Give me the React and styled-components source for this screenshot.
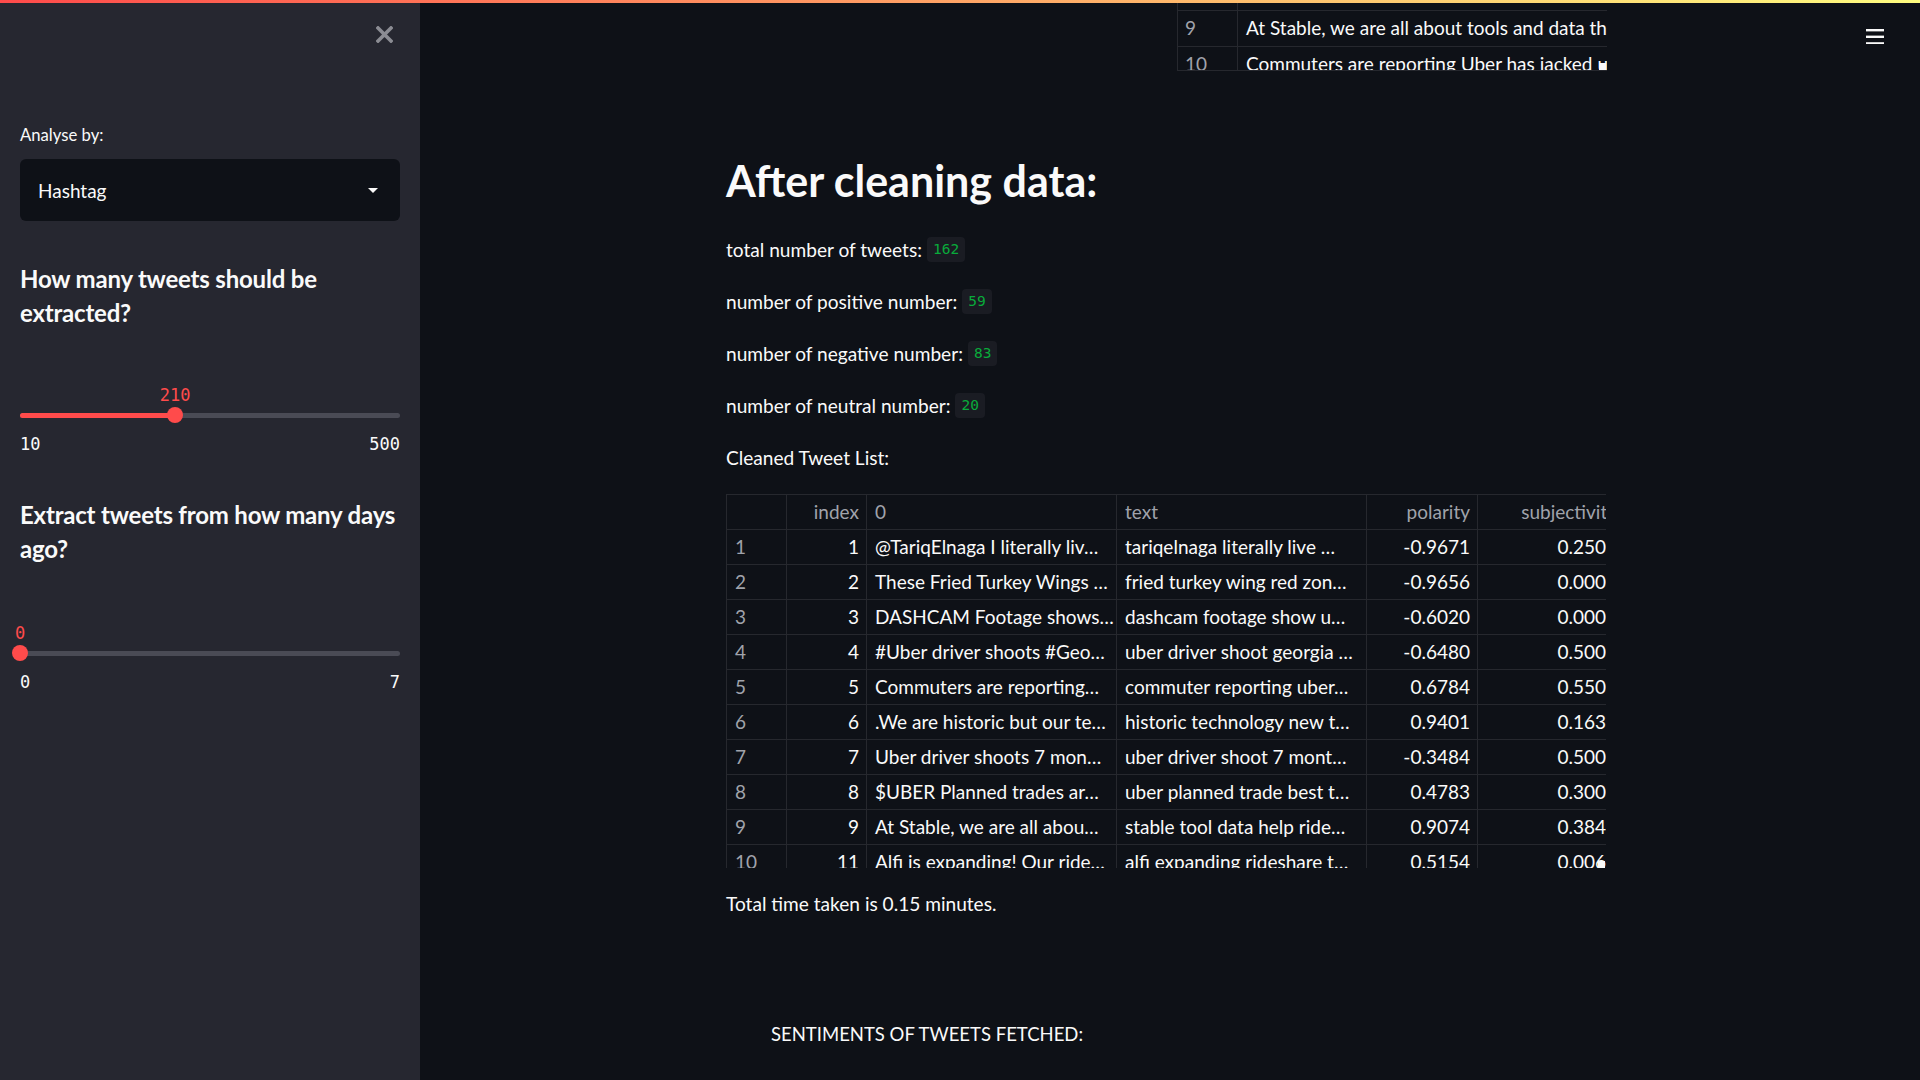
import React from "react";
import styled, { createGlobalStyle } from "styled-components";

// --- DATA ---
const rows = [
  [1, 1, "@TariqElnaga I literally liv…", "tariqelnaga literally live …", "-0.9671", "0.2500"],
  [2, 2, "These Fried Turkey Wings …", "fried turkey wing red zon…", "-0.9656", "0.0000"],
  [3, 3, "DASHCAM Footage shows…", "dashcam footage show u…", "-0.6020", "0.0000"],
  [4, 4, "#Uber driver shoots #Geo…", "uber driver shoot georgia …", "-0.6480", "0.5000"],
  [5, 5, "Commuters are reporting…", "commuter reporting uber…", "0.6784", "0.5500"],
  [6, 6, ".We are historic but our te…", "historic technology new t…", "0.9401", "0.1633"],
  [7, 7, "Uber driver shoots 7 mon…", "uber driver shoot 7 mont…", "-0.3484", "0.5000"],
  [8, 8, "$UBER Planned trades ar…", "uber planned trade best t…", "0.4783", "0.3000"],
  [9, 9, "At Stable, we are all abou…", "stable tool data help ride…", "0.9074", "0.3840"],
  [10, 11, "Alfi is expanding! Our ride…", "alfi expanding rideshare t…", "0.5154", "0.0060"],
];

const counts = [
  ["total number of tweets:", "162"],
  ["number of positive number:", "59"],
  ["number of negative number:", "83"],
  ["number of neutral number:", "20"],
];

// --- COMPONENT ---
const Slider = ({ value, min, max, gap }) => {
  const pct = ((value - min) / (max - min)) * 100;
  return (
    <SliderBlock $gap={gap}>
      <ValueRow>
        <ThumbValue style={{ left: `${pct}%` }}>{value}</ThumbValue>
      </ValueRow>
      <Track>
        <Fill style={{ width: `${pct}%` }} />
        <Thumb style={{ left: `${pct}%` }} />
      </Track>
      <Ticks>
        <span>{min}</span>
        <span>{max}</span>
      </Ticks>
    </SliderBlock>
  );
};

const App = () => (
  <>
    <GlobalStyle />
    <Decoration />
    <Page>
      <Sidebar>
        <CloseButton>
          <svg width="17" height="17" viewBox="0 0 17 17">
            <path d="M2 2 L15 15 M15 2 L2 15" stroke="#8b8c93" strokeWidth="3.6" strokeLinecap="square" />
          </svg>
        </CloseButton>
        <Label>Analyse by:</Label>
        <Select>
          <span>Hashtag</span>
          <svg width="10" height="5" viewBox="0 0 10 5">
            <path d="M0 0 L10 0 L5 5 Z" fill="#fafafa" />
          </svg>
        </Select>
        <SideHeading $gap={41}>How many tweets should be extracted?</SideHeading>
        <Slider value={210} min={10} max={500} gap={55} />
        <SideHeading $gap={44}>Extract tweets from how many days ago?</SideHeading>
        <Slider value={0} min={0} max={7} gap={57} />
      </Sidebar>

      <Main>
        <Menu>
          <svg width="18" height="16" viewBox="0 0 18 16">
            <rect x="0" y="1" width="18" height="2.4" fill="#fafafa" />
            <rect x="0" y="7.6" width="18" height="2.4" fill="#fafafa" />
            <rect x="0" y="14.2" width="18" height="2.4" fill="#fafafa" />
          </svg>
        </Menu>
        <Content>
          <Columns>
            <div />
            <Fragment>
              <FragmentInner>
                <FragRow>
                  <FragIdx>8</FragIdx>
                  <FragText>$UBER Planned trades are up on the charts today</FragText>
                </FragRow>
                <FragRow>
                  <FragIdx>9</FragIdx>
                  <FragText>At Stable, we are all about tools and data that help riders</FragText>
                </FragRow>
                <FragRow>
                  <FragIdx>10</FragIdx>
                  <FragText>Commuters are reporting Uber has jacked up prices</FragText>
                </FragRow>
              </FragmentInner>
              <ScrollMark />
            </Fragment>
          </Columns>

          <Title>After cleaning data:</Title>
          {counts.map(([label, n]) => (
            <Para key={label}>
              {label} <Code>{n}</Code>
            </Para>
          ))}
          <Para>Cleaned Tweet List:</Para>

          <Table>
            <TableInner>
              <Row>
                <Cell $head />
                <Cell $head $right>index</Cell>
                <Cell $head>0</Cell>
                <Cell $head>text</Cell>
                <Cell $head $right>polarity</Cell>
                <Cell $head $right>subjectivity</Cell>
              </Row>
              {rows.map((r) => (
                <Row key={r[0]}>
                  <Cell $head>{r[0]}</Cell>
                  <Cell $right>{r[1]}</Cell>
                  <Cell>{r[2]}</Cell>
                  <Cell>{r[3]}</Cell>
                  <Cell $right>{r[4]}</Cell>
                  <Cell $right>{r[5]}</Cell>
                </Row>
              ))}
            </TableInner>
            <ScrollMark />
          </Table>

          <Para $gap={22}>Total time taken is 0.15 minutes.</Para>
          <ChartTitle>SENTIMENTS OF TWEETS FETCHED:</ChartTitle>
        </Content>
      </Main>
    </Page>
  </>
);

// --- STYLES ---
const GlobalStyle = createGlobalStyle`
  html, body {
    margin: 0;
    padding: 0;
    background: #0e1117;
    overflow: hidden;
  }
  * { box-sizing: border-box; }
  body {
    font-family: Lato, "Open Sans", sans-serif;
    color: #fafafa;
  }
`;

const Decoration = styled.div`
  position: fixed;
  top: 0;
  left: 0;
  right: 0;
  height: 3px;
  background: linear-gradient(90deg, rgb(255, 75, 75), rgb(255, 253, 128));
  z-index: 10;
`;

const Page = styled.div`
  display: flex;
  height: 100vh;
`;

const Sidebar = styled.aside`
  width: 420px;
  flex: 0 0 420px;
  background: #262730;
  padding: 26px 20px 0;
  display: flex;
  flex-direction: column;
`;

const CloseButton = styled.div`
  align-self: flex-end;
  width: 17px;
  height: 17px;
  margin-right: 7px;
  display: flex;
`;

const Label = styled.div`
  margin-top: 81px;
  font-size: 16.7px;
  line-height: 22px;
`;

const Select = styled.div`
  margin-top: 13px;
  height: 62px;
  background: #0e1117;
  border-radius: 6px;
  display: flex;
  align-items: center;
  justify-content: space-between;
  padding: 0 22px 0 18px;
  font-size: 19px;
`;

const SideHeading = styled.h3`
  margin: ${({ $gap }) => $gap}px 0 0;
  font-size: 24px;
  font-weight: 700;
  line-height: 34px;
  letter-spacing: -0.2px;
`;

const SliderBlock = styled.div`
  margin-top: ${({ $gap }) => $gap}px;
  font-family: "DejaVu Sans Mono", "Liberation Mono", monospace;
`;

const ValueRow = styled.div`
  position: relative;
  height: 20px;
`;

const ThumbValue = styled.span`
  position: absolute;
  top: 0;
  transform: translateX(-50%);
  font-size: 17px;
  line-height: 20px;
  color: #ff4b4b;
  white-space: nowrap;
`;

const Track = styled.div`
  position: relative;
  margin-top: 2px;
  height: 16px;
  &::before {
    content: "";
    position: absolute;
    left: 0;
    right: 0;
    top: 5.5px;
    height: 5px;
    border-radius: 3px;
    background: #4a4b55;
  }
`;

const Fill = styled.div`
  position: absolute;
  left: 0;
  top: 5.5px;
  height: 5px;
  border-radius: 3px;
  background: #ff4b4b;
`;

const Thumb = styled.div`
  position: absolute;
  top: 0;
  width: 16px;
  height: 16px;
  margin-left: -8px;
  border-radius: 50%;
  background: #ff4b4b;
`;

const Ticks = styled.div`
  margin-top: 11px;
  display: flex;
  justify-content: space-between;
  font-size: 17px;
  line-height: 20px;
  color: #fafafa;
`;

const Main = styled.main`
  flex: 1;
  position: relative;
  overflow: hidden;
`;

const Menu = styled.div`
  position: absolute;
  top: 28px;
  right: 36px;
  display: flex;
`;

const Content = styled.div`
  width: 881px;
  margin-left: 306px;
  display: flex;
  flex-direction: column;
`;

const Columns = styled.div`
  display: grid;
  grid-template-columns: 1fr 430px;
  gap: 21px;
`;

const Fragment = styled.div`
  position: relative;
  height: 71px;
  overflow: hidden;
  border-left: 1px solid #26282e;
  border-bottom: 1px solid #26282e;
`;

const FragmentInner = styled.div`
  margin-top: -25px;
`;

const FragRow = styled.div`
  display: grid;
  grid-template-columns: 60px 1fr;
  height: 36px;
  border-bottom: 1px solid #26282e;
`;

const FragIdx = styled.div`
  border-right: 1px solid #26282e;
  padding: 0 0 2px 7px;
  display: flex;
  align-items: center;
  color: #a0a3ab;
  font-size: 19px;
`;

const FragText = styled.div`
  padding: 0 0 2px 8px;
  display: flex;
  align-items: center;
  white-space: nowrap;
  overflow: hidden;
  font-size: 19px;
`;

const ScrollMark = styled.div`
  position: absolute;
  right: 1px;
  bottom: 0;
  width: 7px;
  height: 7px;
  background: #fafafa;
`;

const Title = styled.h1`
  margin: 80px 0 0;
  font-size: 43px;
  font-weight: 700;
  line-height: 60px;
`;

const Para = styled.p`
  margin: ${({ $gap }) => $gap ?? 25}px 0 0;
  font-size: 19.1px;
  line-height: 27px;
  display: flex;
  align-items: center;
  gap: 5px;
`;

const Code = styled.code`
  font-family: "DejaVu Sans Mono", "Liberation Mono", monospace;
  font-size: 14.5px;
  color: #09ab3b;
  background: #1a1c23;
  border-radius: 4px;
  padding: 0 6px;
  height: 25px;
  display: inline-flex;
  align-items: center;
`;

const Table = styled.div`
  position: relative;
  margin-top: 23px;
  width: 880px;
  height: 374px;
  overflow: hidden;
  border-top: 1px solid #26282e;
  border-left: 1px solid #26282e;
`;

const TableInner = styled.div`
  width: 898px;
`;

const Row = styled.div`
  display: grid;
  grid-template-columns: 60px 80px 250px 250px 111px 147px;
  height: 35px;
`;

const Cell = styled.div`
  display: flex;
  align-items: center;
  justify-content: ${({ $right }) => ($right ? "flex-end" : "flex-start")};
  padding: 0 7px 2px 8px;
  border-right: 1px solid #26282e;
  border-bottom: 1px solid #26282e;
  white-space: nowrap;
  overflow: hidden;
  font-size: 19px;
  color: ${({ $head }) => ($head ? "#a0a3ab" : "#fafafa")};
`;

const ChartTitle = styled.div`
  margin-top: 104px;
  padding-left: 45px;
  font-size: 18.5px;
  line-height: 27px;
`;

export default App;
